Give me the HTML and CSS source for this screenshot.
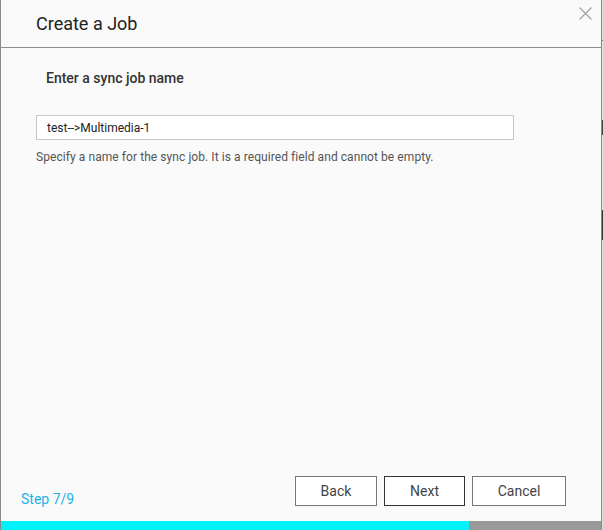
FILE: index.html
```html
<!DOCTYPE html>
<html lang="en">
<head>
    <meta charset="UTF-8">
    <meta name="viewport" content="width=device-width, initial-scale=1.0">
    <link rel="stylesheet" href="styles.css">
    <title>Create a Job</title>
</head>
<body>
<div class="page">
    <div class="dialog">
        <div class="dialog-header">
            <span class="dialog-title">Create a Job</span>
            <button class="close-btn" aria-label="Close">
                <svg width="13" height="13" viewBox="0 0 13 13">
                    <path d="M0.5 0.5 L12.5 12.5 M12.5 0.5 L0.5 12.5" stroke="#a0a0a0" stroke-width="1.1" fill="none"/>
                </svg>
            </button>
        </div>

        <div class="dialog-body">
            <div class="section-title">Enter a sync job name</div>
            <input class="text-field" type="text" value="test-->Multimedia-1">
            <div class="hint">Specify a name for the sync job. It is a required field and cannot be empty.</div>
        </div>

        <div class="dialog-footer">
            <span class="step">Step 7/9</span>
            <div class="buttons">
                <button class="btn btn-back">Back</button>
                <button class="btn btn-next">Next</button>
                <button class="btn btn-cancel">Cancel</button>
            </div>
        </div>

        <div class="progress">
            <div class="progress-fill" style="width: 78%"></div>
        </div>
    </div>
    <div class="backdrop-edge"></div>
</div>
</body>
</html>
```

FILE: styles.css
```css
body, html {
    margin: 0;
    padding: 0;
    height: 100%;
}

body {
    font-family: Roboto, "Liberation Sans", sans-serif;
    color: #333;
    overflow: hidden;
}

.page {
    display: flex;
    height: 530px;
}

.dialog {
    width: 600px;
    height: 530px;
    display: flex;
    flex-direction: column;
    background-color: #fafafa;
    border-left: 1px solid #8a8a8a;
    border-right: 1px solid #8a8a8a;
    box-sizing: content-box;
}

.backdrop-edge {
    flex: 1;
    background: linear-gradient(#e0e0e0 0, #e0e0e0 40px, #888 40px, #888 41px, #e4e4e4 41px, #e4e4e4 120px, #444 120px, #444 135px, #e8e8e8 135px, #e8e8e8 210px, #333 210px, #333 240px, #ddd 240px);
}

.dialog-header {
    height: 47px;
    border-bottom: 1px solid #8c8c8c;
    display: flex;
    align-items: center;
    justify-content: space-between;
    padding-left: 35px;
    position: relative;
}

.dialog-title {
    font-size: 18px;
    color: #222;
    margin-top: -1px;
}

.close-btn {
    position: absolute;
    top: 7px;
    right: 9px;
    padding: 0;
    border: none;
    background: transparent;
    cursor: pointer;
    line-height: 0;
}

.dialog-body {
    flex: 1;
    padding: 21px 0 0 35px;
}

.section-title {
    font-size: 14px;
    font-weight: 500;
    color: #333;
    line-height: 19px;
    padding-left: 10px;
}

.text-field {
    display: block;
    margin-top: 27px;
    width: 478px;
    height: 25px;
    box-sizing: border-box;
    border: 1px solid #c8c8c8;
    background: #fff;
    padding: 0 10px;
    font-family: Roboto, "Liberation Sans", sans-serif;
    font-size: 12px;
    color: #222;
    outline: none;
}

.hint {
    margin-top: 9px;
    font-size: 12px;
    line-height: 16px;
    letter-spacing: 0.07px;
    color: #555;
}

.dialog-footer {
    display: flex;
    align-items: flex-end;
    justify-content: space-between;
    padding: 0 35px 15px 20px;
}

.step {
    font-size: 14px;
    color: #1eb2e6;
    line-height: 16px;
    margin-bottom: -1px;
}

.buttons {
    display: flex;
    gap: 7px;
}

.btn {
    height: 30px;
    box-sizing: border-box;
    background: #fff;
    border: 1px solid #777;
    font-family: Roboto, "Liberation Sans", sans-serif;
    font-size: 14px;
    color: #444;
    cursor: pointer;
    padding: 0;
}

.btn-back {
    width: 82px;
}

.btn-next {
    width: 81px;
    border-color: #333;
}

.btn-cancel {
    width: 94px;
}

.progress {
    height: 9px;
    background-color: #999;
}

.progress-fill {
    height: 100%;
    background-color: #00f2fb;
}
```
